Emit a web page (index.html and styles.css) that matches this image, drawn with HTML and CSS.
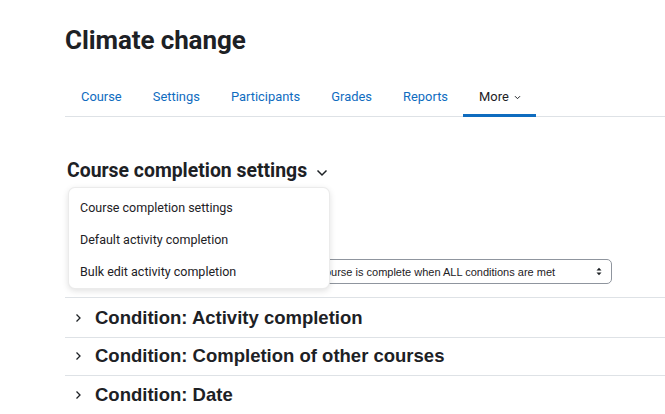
FILE: index.html
```html
<!DOCTYPE html>
<html>
<head>
<meta charset="utf-8">
<link rel="stylesheet" href="styles.css">
</head>
<body>
<div class="page">
  <h1 class="title">Climate change</h1>
  <nav class="tabs">
    <a class="tab" href="#">Course</a>
    <a class="tab" href="#">Settings</a>
    <a class="tab" href="#">Participants</a>
    <a class="tab" href="#">Grades</a>
    <a class="tab" href="#">Reports</a>
    <a class="tab active" href="#">More <svg class="tab-caret" width="7" height="5" viewBox="0 0 7 5"><path d="M1 1.2 L3.5 3.7 L6 1.2" fill="none" stroke="#1d2125" stroke-width="1"/></svg></a>
  </nav>
  <div class="selector">
    <h2 class="subtitle">Course completion settings <svg class="sub-caret" width="12" height="8" viewBox="0 0 12 8"><path d="M1.5 1.5 L6 6 L10.5 1.5" fill="none" stroke="#1d2125" stroke-width="1.5"/></svg></h2>
    <div class="menu">
      <a class="menu-item" href="#">Course completion settings</a>
      <a class="menu-item" href="#">Default activity completion</a>
      <a class="menu-item" href="#">Bulk edit activity completion</a>
    </div>
  </div>
  <div class="form-row">
    <div class="label-space"></div>
    <div class="select">
      <span class="select-text">Course is complete when ALL conditions are met</span>
      <svg class="select-arrow" width="6" height="9" viewBox="0 0 6 9"><path d="M0.5 3.5 L3 0.8 L5.5 3.5 Z M0.5 5.5 L3 8.2 L5.5 5.5 Z" fill="#1d2125"/></svg>
    </div>
  </div>
  <div class="sections">
    <div class="section"><svg class="sec-caret" width="7" height="10" viewBox="0 0 7 10"><path d="M1.5 1.5 L5 5 L1.5 8.5" fill="none" stroke="#1d2125" stroke-width="1.3"/></svg><h3 class="sec-title">Condition: Activity completion</h3></div>
    <div class="section"><svg class="sec-caret" width="7" height="10" viewBox="0 0 7 10"><path d="M1.5 1.5 L5 5 L1.5 8.5" fill="none" stroke="#1d2125" stroke-width="1.3"/></svg><h3 class="sec-title">Condition: Completion of other courses</h3></div>
    <div class="section"><svg class="sec-caret" width="7" height="10" viewBox="0 0 7 10"><path d="M1.5 1.5 L5 5 L1.5 8.5" fill="none" stroke="#1d2125" stroke-width="1.3"/></svg><h3 class="sec-title">Condition: Date</h3></div>
  </div>
</div>
</body>
</html>
```
FILE: styles.css
```css
html, body {
  margin: 0;
  padding: 0;
  background: #ffffff;
}
body {
  font-family: Roboto, "Liberation Sans", sans-serif;
  color: #1d2125;
  overflow: hidden;
}
.page {
  padding: 0 0 0 65px;
}
.title {
  margin: 0;
  padding-top: 24px;
  font-size: 26px;
  font-weight: 700;
  line-height: 32px;
  letter-spacing: -0.1px;
}
.tabs {
  display: flex;
  margin-top: 23px;
  border-bottom: 1px solid #dee2e6;
}
.tab {
  display: flex;
  align-items: center;
  gap: 5px;
  padding: 8px 15.1px 8px 16px;
  font-size: 12.9px;
  line-height: 19px;
  color: #0f6cbf;
  text-decoration: none;
  border-bottom: 3px solid transparent;
  margin-bottom: -1px;
}
.tab.active {
  color: #1d2125;
  border-bottom-color: #0f6cbf;
}
.tab-caret {
  margin-top: 1px;
}
.selector {
  position: relative;
  margin-top: 41px;
  margin-left: 2px;
}
.subtitle {
  display: flex;
  align-items: center;
  gap: 9px;
  margin: 0;
  font-size: 19.4px;
  line-height: 26px;
  font-weight: 700;
}
.sub-caret {
  margin-top: 3px;
}
.menu {
  position: absolute;
  left: 1px;
  top: 29px;
  width: 262px;
  height: 102px;
  box-sizing: border-box;
  padding: 4px 0;
  background: #ffffff;
  border: 1px solid rgba(0, 0, 0, 0.08);
  border-radius: 7px;
  box-shadow: 0 2px 6px rgba(0, 0, 0, 0.12);
  z-index: 2;
}
.menu-item {
  display: block;
  padding: 6px 11px;
  font-size: 12.5px;
  line-height: 20px;
  color: #1d2125;
  text-decoration: none;
}
.form-row {
  display: flex;
  align-items: center;
  margin-top: 75px;
  padding-bottom: 13px;
  border-bottom: 1px solid #dee2e6;
}
.label-space {
  width: 240px;
}
.select {
  display: flex;
  align-items: center;
  justify-content: space-between;
  width: 307px;
  height: 25px;
  box-sizing: border-box;
  padding: 0 9px 0 11px;
  border: 1px solid #8f959e;
  border-radius: 5px;
  font-family: "Liberation Sans", Arial, sans-serif;
  font-size: 11px;
}
.sections {
  display: flex;
  flex-direction: column;
  padding-top: 1px;
}
.section {
  display: flex;
  align-items: center;
  gap: 13px;
  height: 37.5px;
  padding-left: 10px;
  border-bottom: 1px solid #dee2e6;
}
.sec-title {
  margin: 0;
  font-family: "Liberation Sans", Arial, sans-serif;
  font-size: 18.5px;
  font-weight: 700;
  line-height: 22px;
}
```
